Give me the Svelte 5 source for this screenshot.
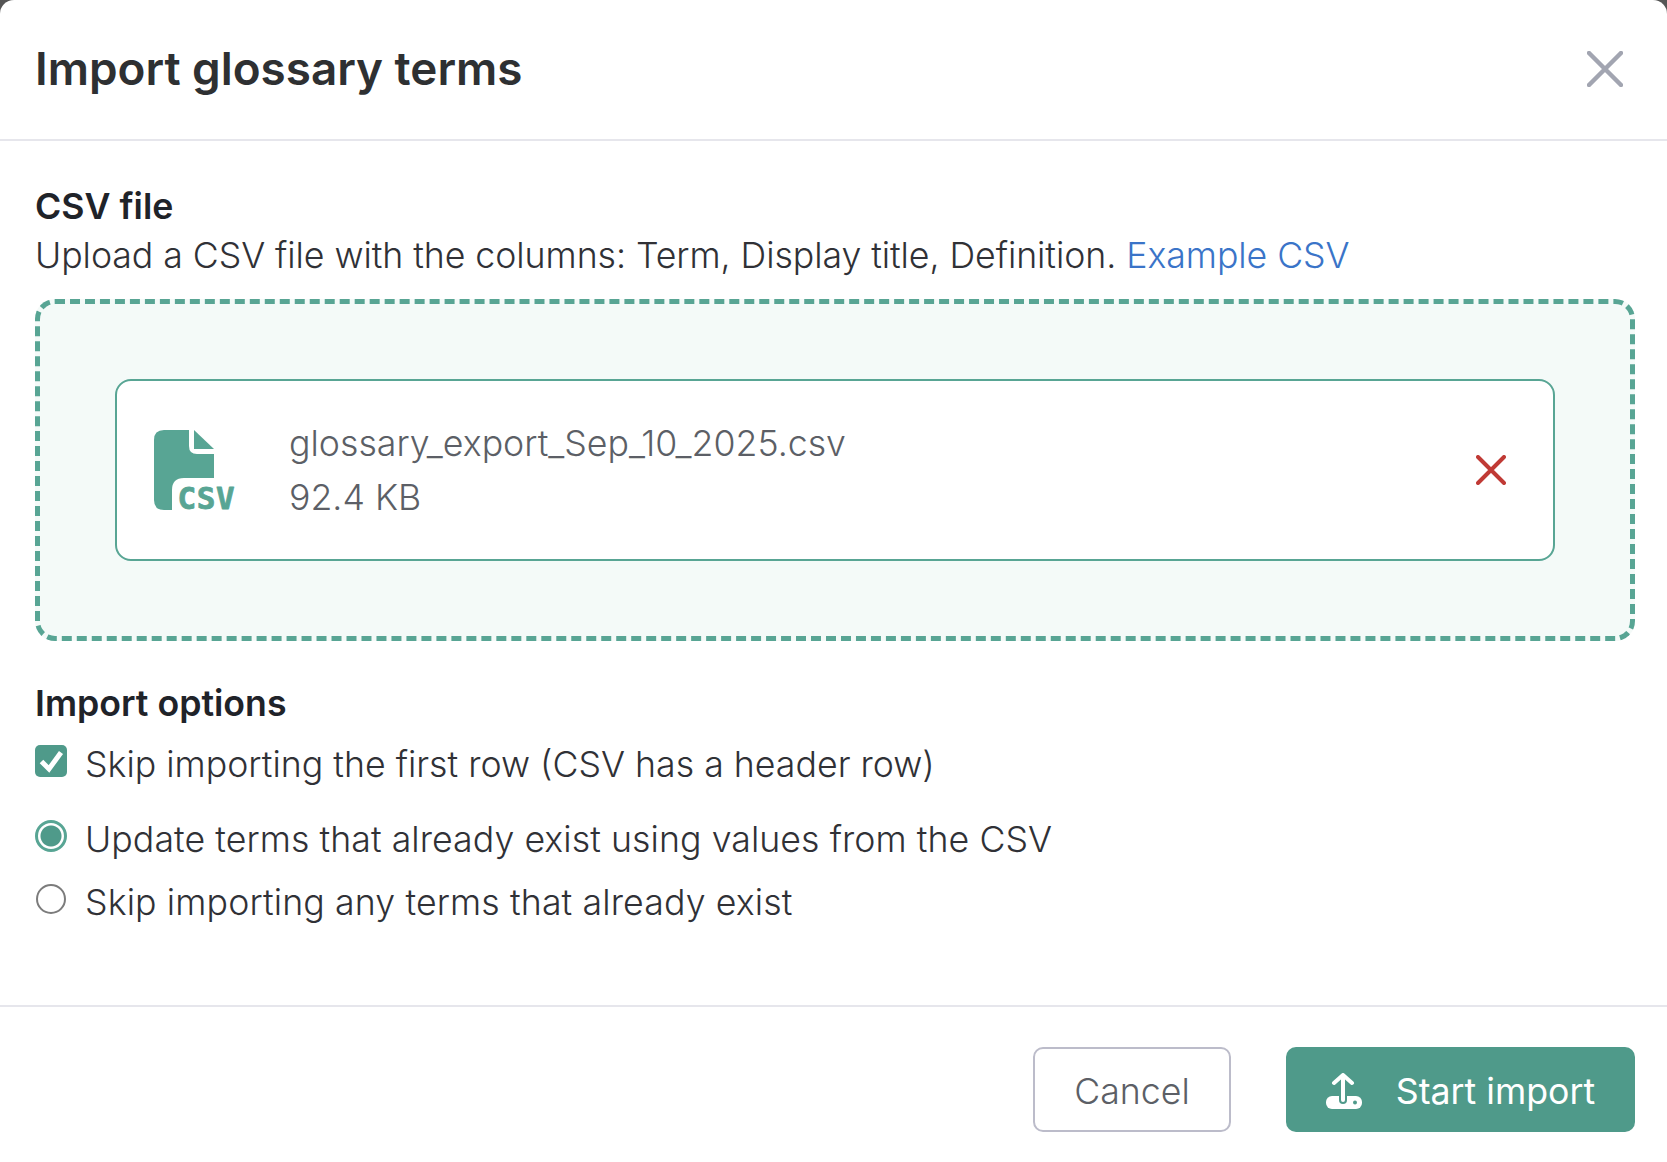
<script>
    const options = [
        { label: "Update terms that already exist using values from the CSV", checked: true, fit: "fit-a" },
        { label: "Skip importing any terms that already exist", checked: false, fit: "fit-b" }
    ]
</script>

<div class="modal">
    <header class="modal-header">
        <h1>Import glossary terms</h1>
        <button class="close" aria-label="Close">
            <svg width="36" height="36" viewBox="0 0 36 36">
                <path d="M2 2 L34 34 M34 2 L2 34" stroke="#a2a5b1" stroke-width="4.500" stroke-linecap="round" fill="none" />
            </svg>
        </button>
    </header>

    <main class="modal-body">
        <h2>CSV file</h2>
        <p class="hint">Upload a CSV file with the columns: Term, Display title, Definition. <a href="#example">Example CSV</a></p>

        <div class="dropzone">
            <div class="file-card">
                <svg class="csv-icon" width="82" height="80" viewBox="0 0 82 80">
                    <path d="M10 0 H35 V16 Q35 24 43 24 H60 V48 H30 Q18 48 18 60 V80 H10 Q0 80 0 70 V10 Q0 0 10 0 Z" fill="#58a594" />
                    <path d="M40 0 L60 19 H40 Z" fill="#58a594" />
                    <text x="23.500" y="79" class="csv-text">CSV</text>
                </svg>
                <div class="file-info">
                    <div>glossary_export_Sep_10_2025.csv</div>
                    <div>92.4 KB</div>
                </div>
                <button class="remove" aria-label="Remove file">
                    <svg width="30" height="30" viewBox="0 0 30 30">
                        <path d="M2 2 L28 28 M28 2 L2 28" stroke="#c03a35" stroke-width="4" stroke-linecap="round" fill="none" />
                    </svg>
                </button>
            </div>
        </div>

        <h2 class="options-title">Import options</h2>
        <label class="option first">
            <span class="checkbox">
                <svg width="32" height="32" viewBox="0 0 32 32">
                    <path d="M6.500 16.500 L14 24 L26 7.500" stroke="#fff" stroke-width="5" fill="none" />
                </svg>
            </span>
            <span>Skip importing the first row (CSV has a header row)</span>
        </label>
        {#each options as option}
            <label class="option">
                <span class="radio" class:checked={option.checked}></span>
                <span class={option.fit}>{option.label}</span>
            </label>
        {/each}
    </main>

    <footer class="modal-footer">
        <button class="btn cancel">Cancel</button>
        <button class="btn primary">
            <svg width="36" height="36" viewBox="0 0 36 36">
                <rect x="0" y="23" width="36" height="13" rx="6" fill="#fff" />
                <path d="M17 12 V27" stroke="#4f9a8a" stroke-width="8" stroke-linecap="round" fill="none" />
                <path d="M8 10 L17 2 L26 10 M17 3 V27" stroke="#fff" stroke-width="4" stroke-linecap="round" stroke-linejoin="round" fill="none" />
                <circle cx="29" cy="29.500" r="2" fill="#4f9a8a" />
            </svg>
            Start import
        </button>
    </footer>
</div>

<style>
    :global(body) {
        background: #555;
        font-family: Inter, "Liberation Sans", sans-serif;
    }

    .modal {
        background: #fff;
        border-radius: 14px 14px 0 0;
        height: 1162px;
        display: flex;
        flex-direction: column;
        color: #303136;
    }

    .modal-header {
        height: 141px;
        box-sizing: border-box;
        border-bottom: 2px solid #e6e6ec;
        display: flex;
        align-items: center;
        justify-content: space-between;
        padding: 0 44px 2px 35px;
    }

    h1 {
        margin: 0;
        font-size: 45.800px;
        font-weight: 600;
        color: #2e3032;
    }

    .close, .remove {
        border: 0;
        background: none;
        padding: 0;
        display: flex;
    }

    .modal-body {
        flex: 1;
        padding: 42px 32px 0 35px;
    }

    h2 {
        margin: 0;
        font-size: 35.700px;
        line-height: 46px;
        font-weight: 600;
        color: #1f2329;
    }

    .hint {
        margin: 2px 0 0;
        font-size: 35.700px;
        line-height: 48px;
        font-weight: 300;
        letter-spacing: -0.065px;
    }

    .hint a {
        color: #3a74c8;
        text-decoration: none;
    }

    .dropzone {
        margin-top: 20px;
        height: 342px;
        box-sizing: border-box;
        border: 5px dashed #58a594;
        border-radius: 20px;
        background: #f4faf8;
        padding: 75px;
        display: flex;
    }

    .file-card {
        flex: 1;
        box-sizing: border-box;
        border: 2px solid #58a594;
        border-radius: 16px;
        background: #fff;
        display: flex;
        align-items: center;
        padding: 0 47px 0 37px;
    }

    .csv-icon {
        overflow: visible;
    }

    .csv-text {
        font-family: "DejaVu Sans Mono", monospace;
        font-size: 31px;
        font-weight: 700;
        letter-spacing: 0.6px;
        fill: #58a594;
        stroke: #58a594;
        stroke-width: 0.8px;
        stroke-linejoin: round;
    }

    .file-info {
        flex: 1;
        margin-left: 53px;
        font-size: 35.700px;
        line-height: 54px;
        font-weight: 300;
        color: #5c5f66;
    }

    .options-title {
        margin-top: 39px;
    }

    .option {
        display: flex;
        align-items: flex-start;
        gap: 18px;
        font-size: 35.700px;
        line-height: 48px;
        font-weight: 300;
        margin-top: 15px;
    }

    .option.first {
        margin-top: 14px;
        margin-bottom: 27px;
    }

    .fit-a {
        letter-spacing: 0.056px;
    }

    .fit-b {
        letter-spacing: 0.12px;
    }

    .checkbox {
        width: 32px;
        height: 32px;
        margin-top: 5px;
        border-radius: 5px;
        background: #4f9a8a;
        display: flex;
    }

    .radio {
        width: 30px;
        height: 30px;
        margin: 6px 1px 0;
        box-sizing: border-box;
        border-radius: 50%;
        border: 2px solid #7c7c7c;
    }

    .radio.checked {
        width: 32px;
        height: 32px;
        margin: 5px 0 0;
        border: 3px solid #58a594;
        background: radial-gradient(circle, #4f9a8a 0 10px, #fff 11px);
    }

    .modal-footer {
        height: 157px;
        box-sizing: border-box;
        border-top: 2px solid #e6e6ec;
        display: flex;
        justify-content: flex-end;
        gap: 55px;
        padding: 40px 32px 0 0;
    }

    .btn {
        height: 85px;
        box-sizing: border-box;
        border-radius: 10px;
        font-family: inherit;
        font-size: 35.700px;
        font-weight: 300;
        padding: 2px 0 0;
    }

    .cancel {
        width: 198px;
        border: 2px solid #bcbcca;
        background: #fff;
        color: #5c5f66;
    }

    .primary {
        width: 349px;
        border: 0;
        background: #4f9a8a;
        color: #fff;
        font-weight: 400;
        display: flex;
        align-items: center;
        justify-content: center;
        gap: 34px;
    }
</style>
